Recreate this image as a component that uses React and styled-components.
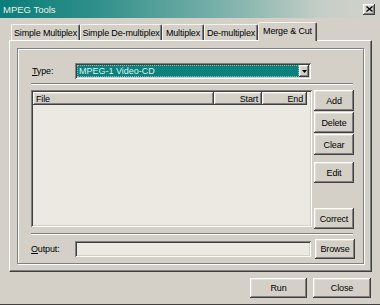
import React from 'react';
import styled, { createGlobalStyle } from 'styled-components';

const Global = createGlobalStyle`
  html, body { margin: 0; padding: 0; background: #d4d0c8; }
  body { font-family: "Liberation Sans", Arial, sans-serif; }
  * { box-sizing: border-box; }
`;

const raised = `
  box-shadow: inset -1px -1px #404040, inset 1px 1px #ffffff, inset -2px -2px #808080, inset 2px 2px #e2ded6;
`;
const sunken = `
  box-shadow: inset 1px 1px #808080, inset -1px -1px #ffffff, inset 2px 2px #404040, inset -2px -2px #d4d0c8;
`;

const Window = styled.div`
  width: 380px;
  height: 305px;
  background: #d4d0c8;
  display: flex;
  flex-direction: column;
  border-bottom: 1px solid #404040;
  font-family: "Liberation Sans", Arial, sans-serif;
  font-size: 9px;
  letter-spacing: -0.15px;
  color: #000;
`;

const TitleBar = styled.div`
  height: 18px;
  flex: none;
  display: flex;
  align-items: center;
  justify-content: space-between;
  padding: 0 5px 0 3px;
  background: linear-gradient(90deg, #0b7d7b 0%, #2f8f8a 25%, #7fb3ac 60%, #c6cfc7 85%, #d0d2ca 100%);
`;

const Title = styled.span`
  color: #e6f0ea;
  font-size: 9.5px;
  letter-spacing: 0;
`;

const CloseBox = styled.div`
  width: 12px;
  height: 11px;
  background: #d4d0c8;
  display: flex;
  align-items: center;
  justify-content: center;
  ${raised}
`;

const Body = styled.div`
  display: flex;
  flex-direction: column;
  padding: 0 8px 0 9px;
`;

const TabStrip = styled.div`
  display: flex;
  align-items: flex-end;
  height: 19px;
  margin-top: 4px;
  margin-bottom: -1px;
  padding-left: 2px;
  position: relative;
  z-index: 1;
`;

const Tab = styled.div`
  width: ${p => p.$w}px;
  height: ${p => (p.$active ? 19 : 16)}px;
  margin-bottom: ${p => (p.$active ? 0 : 1)}px;
  background: #d4d0c8;
  border-top: 1px solid #f4f2ee;
  border-left: 1px solid #f4f2ee;
  border-right: 1px solid #404040;
  border-top-left-radius: 2px;
  border-top-right-radius: 2px;
  box-shadow: inset -1px 0 #808080;
  display: flex;
  align-items: center;
  justify-content: center;
  padding-bottom: ${p => (p.$active ? 2 : 0)}px;
  white-space: nowrap;
`;

const Panel = styled.div`
  height: 232px;
  border-top: 1px solid #ffffff;
  border-left: 1px solid #ffffff;
  border-right: 1px solid #404040;
  border-bottom: 1px solid #404040;
  box-shadow: inset -1px -1px #808080;
  padding: 7px 7px 6px 7px;
`;

const Frame = styled.div`
  border: 1px solid #808080;
  box-shadow: inset 1px 1px #ffffff, 1px 1px #ffffff;
  padding: 14px 8px 4px 13px;
  display: flex;
  flex-direction: column;
`;

const Row = styled.div`
  display: flex;
  align-items: center;
  height: ${p => p.$h}px;
  margin-top: ${p => p.$mt || 0}px;
`;

const Label = styled.span`
  width: 44px;
  flex: none;
  padding-left: ${p => p.$indent || 0}px;
  u { text-decoration: underline; }
`;

const Combo = styled.div`
  width: 236px;
  height: 16px;
  background: #ece9e2;
  padding: 2px;
  display: flex;
  ${sunken}
`;

const ComboValue = styled.div`
  flex: 1;
  background: #0c827f;
  color: #dff2ee;
  outline: 1px dotted #7fc0bb;
  outline-offset: -1px;
  display: flex;
  align-items: center;
  padding-left: 2px;
  letter-spacing: 0;
`;

const DropButton = styled.div`
  width: 10px;
  background: #d4d0c8;
  display: flex;
  align-items: center;
  justify-content: center;
  ${raised}
`;

const Separator = styled.div`
  height: 2px;
  margin: ${p => p.$mt}px 2px 0 0;
  border-top: 1px solid #808080;
  border-bottom: 1px solid #ffffff;
`;

const Middle = styled.div`
  display: flex;
  gap: 2px;
  margin-top: 5px;
  height: 139px;
`;

const List = styled.div`
  width: 281px;
  height: 137px;
  background: #ece9e2;
  padding: 2px;
  ${sunken}
`;

const Header = styled.div`
  display: flex;
  height: 13px;
`;

const HeadCell = styled.div`
  width: ${p => p.$w}px;
  height: 13px;
  background: #d4d0c8;
  display: flex;
  align-items: center;
  justify-content: ${p => (p.$right ? 'flex-end' : 'flex-start')};
  padding: 0 4px 0 3px;
  ${raised}
`;

const Side = styled.div`
  width: 40px;
  display: flex;
  flex-direction: column;
`;

const Button = styled.div`
  width: ${p => p.$w || 40}px;
  height: ${p => p.$h || 21}px;
  margin-top: ${p => (p.$mt === 'auto' ? 'auto' : `${p.$mt || 0}px`)};
  margin-left: ${p => (p.$pushRight ? 'auto' : '0')};
  flex: none;
  background: #d4d0c8;
  display: flex;
  align-items: center;
  justify-content: center;
  ${raised}
`;

const Field = styled.div`
  width: 236px;
  height: 16px;
  background: #ece9e2;
  ${sunken}
`;

const BottomBar = styled.div`
  display: flex;
  justify-content: flex-end;
  gap: 6px;
  margin-top: 6px;
  padding-right: 1px;
`;

export default function App() {
  return (
    <>
      <Global />
      <Window>
        <TitleBar>
          <Title>MPEG Tools</Title>
          <CloseBox>
            <svg width="7" height="6" viewBox="0 0 7 6">
              <path d="M0.5 0.5 L6.5 5.5 M6.5 0.5 L0.5 5.5" stroke="#000" strokeWidth="1.3" />
            </svg>
          </CloseBox>
        </TitleBar>
        <Body>
          <TabStrip>
            <Tab $w={69}>Simple Multiplex</Tab>
            <Tab $w={82}>Simple De-multiplex</Tab>
            <Tab $w={42}>Multiplex</Tab>
            <Tab $w={54}>De-multiplex</Tab>
            <Tab $w={59} $active>Merge &amp; Cut</Tab>
          </TabStrip>
          <Panel>
            <Frame>
              <Row $h={16}>
                <Label $indent={1}><u>T</u>ype:</Label>
                <Combo>
                  <ComboValue>MPEG-1 Video-CD</ComboValue>
                  <DropButton>
                    <svg width="5" height="3" viewBox="0 0 5 3">
                      <path d="M0 0 H5 L2.5 3 Z" fill="#000" />
                    </svg>
                  </DropButton>
                </Combo>
              </Row>
              <Separator $mt={4} />
              <Middle>
                <List>
                  <Header>
                    <HeadCell $w={181}>File</HeadCell>
                    <HeadCell $w={48} $right>Start</HeadCell>
                    <HeadCell $w={45} $right>End</HeadCell>
                  </Header>
                </List>
                <Side>
                  <Button>Add</Button>
                  <Button $mt={1}>Delete</Button>
                  <Button $mt={1}>Clear</Button>
                  <Button $mt={7}>Edit</Button>
                  <Button $mt="auto">Correct</Button>
                </Side>
              </Middle>
              <Separator $mt={4} />
              <Row $h={20} $mt={4}>
                <Label><u>O</u>utput:</Label>
                <Field />
                <Button $h={20} $pushRight>Browse</Button>
              </Row>
            </Frame>
          </Panel>
          <BottomBar>
            <Button $w={57} $h={20}>Run</Button>
            <Button $w={58} $h={20}>Close</Button>
          </BottomBar>
        </Body>
      </Window>
    </>
  );
}
